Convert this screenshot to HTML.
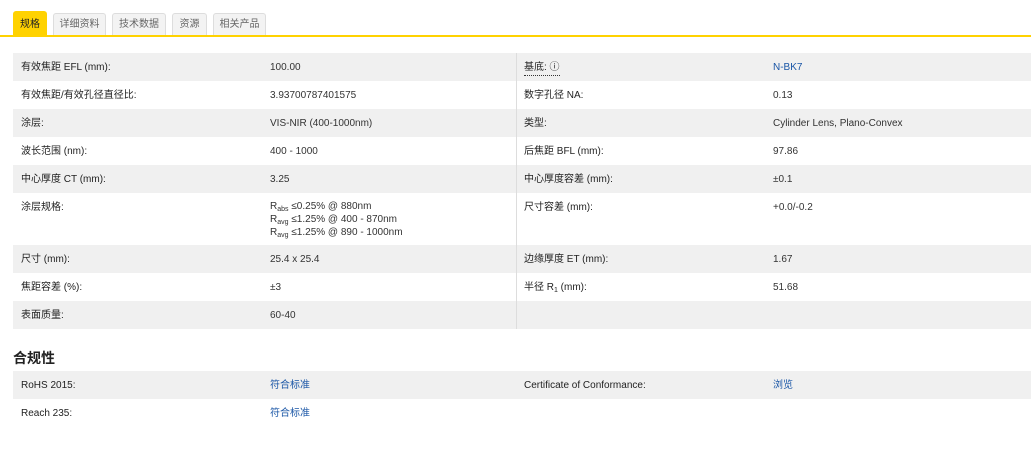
<!DOCTYPE html>
<html><head><meta charset="utf-8"><style>
*{margin:0;padding:0;box-sizing:border-box}
body{width:1031px;height:451px;background:#fff;font-family:"Liberation Sans","Noto Sans CJK SC",sans-serif;font-size:10px;line-height:12px;color:#333;position:relative;overflow:hidden}
.tab{position:absolute;top:13px;height:23px;background:#f3f3f3;border:1px solid #ddd;border-bottom:none;border-radius:3px 3px 0 0;font-size:10px;color:#666;text-align:center;line-height:22px}
.tab.a{top:11px;height:25px;background:#ffd200;border-color:#ffd200;color:#222;line-height:26px}
.line{position:absolute;left:0;top:35px;width:1031px;height:2px;background:#ffd200}
.row{position:absolute;left:13px;width:1018px;height:28px}
.g{background:#f0f0f0}
.row span{position:absolute;top:9px;white-space:nowrap;line-height:12px;height:12px}
.c1{left:8px;color:#222}.c2{left:257px}.c3{left:511px;color:#222}.c4{left:760px}
.div{position:absolute;left:516px;top:53px;width:1px;height:276px;background:#ddd}
a{color:#1a56a6;text-decoration:none}
sub{font-size:7px;vertical-align:-2px;line-height:0}
h3{position:absolute;left:13px;top:349px;font-size:14px;line-height:18px;font-weight:bold;color:#222}
</style></head><body>
<div class="tab a" style="left:13px;width:34px">规格</div>
<div class="tab" style="left:53px;width:53px">详细资料</div>
<div class="tab" style="left:112px;width:54px">技术数据</div>
<div class="tab" style="left:172px;width:35px">资源</div>
<div class="tab" style="left:213px;width:53px">相关产品</div>
<div class="line"></div>

<div class="row g" style="top:53px"><span class="c1">有效焦距 EFL (mm):</span><span class="c2">100.00</span><span class="c3" style="border-bottom:1px dotted #333;height:14px">基底: ⓘ</span><span class="c4"><a>N-BK7</a></span></div>
<div class="row" style="top:81px"><span class="c1">有效焦距/有效孔径直径比:</span><span class="c2">3.93700787401575</span><span class="c3">数字孔径 NA:</span><span class="c4">0.13</span></div>
<div class="row g" style="top:109px"><span class="c1">涂层:</span><span class="c2">VIS-NIR (400-1000nm)</span><span class="c3">类型:</span><span class="c4">Cylinder Lens, Plano-Convex</span></div>
<div class="row" style="top:137px"><span class="c1">波长范围 (nm):</span><span class="c2">400 - 1000</span><span class="c3">后焦距 BFL (mm):</span><span class="c4">97.86</span></div>
<div class="row g" style="top:165px"><span class="c1">中心厚度 CT (mm):</span><span class="c2">3.25</span><span class="c3">中心厚度容差 (mm):</span><span class="c4">±0.1</span></div>
<div class="row" style="top:193px;height:52px"><span class="c1">涂层规格:</span><span class="c2" style="top:7px;height:39px;line-height:13px">R<sub>abs</sub> ≤0.25% @ 880nm<br>R<sub>avg</sub> ≤1.25% @ 400 - 870nm<br>R<sub>avg</sub> ≤1.25% @ 890 - 1000nm</span><span class="c3">尺寸容差 (mm):</span><span class="c4">+0.0/-0.2</span></div>
<div class="row g" style="top:245px"><span class="c1">尺寸 (mm):</span><span class="c2">25.4 x 25.4</span><span class="c3">边缘厚度 ET (mm):</span><span class="c4">1.67</span></div>
<div class="row" style="top:273px"><span class="c1">焦距容差 (%):</span><span class="c2">±3</span><span class="c3">半径 R<sub>1</sub> (mm):</span><span class="c4">51.68</span></div>
<div class="row g" style="top:301px"><span class="c1">表面质量:</span><span class="c2">60-40</span></div>
<div class="div"></div>

<h3>合规性</h3>
<div class="row g" style="top:371px"><span class="c1">RoHS 2015:</span><span class="c2"><a>符合标准</a></span><span class="c3">Certificate of Conformance:</span><span class="c4"><a>浏览</a></span></div>
<div class="row" style="top:399px"><span class="c1">Reach 235:</span><span class="c2"><a>符合标准</a></span></div>
</body></html>
